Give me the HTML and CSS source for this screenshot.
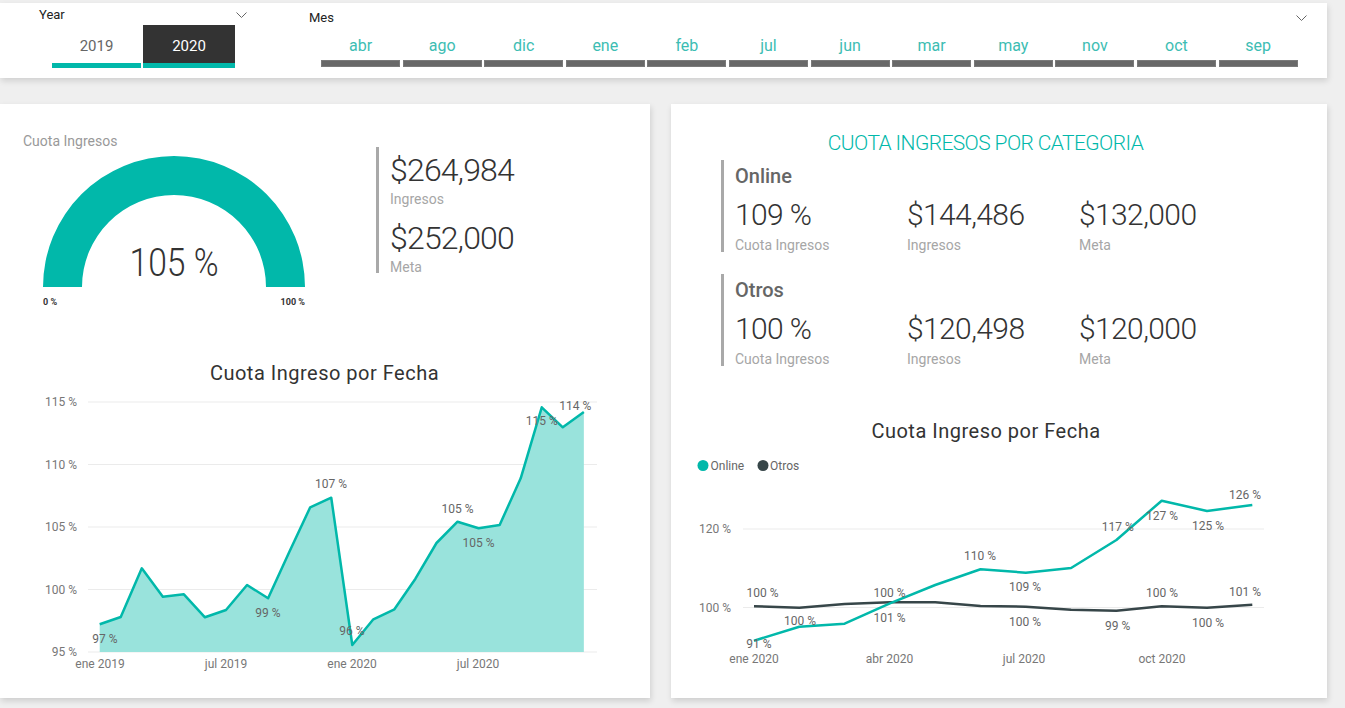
FILE: index.html
```html
<!DOCTYPE html>
<html lang="es">
<head>
<meta charset="utf-8">
<title>Cuota Ingresos</title>
<link rel="stylesheet" href="styles.css">
</head>
<body>
<div class="page">
  <header class="filters">
    <section class="slicer year">
      <div class="slicer-head">
        <span>Year</span>
        <svg class="chev" width="11" height="6" viewBox="0 0 11 6"><path d="M0.5 0.5 L5.5 5.5 L10.5 0.5" fill="none" stroke="#666" stroke-width="1"/></svg>
      </div>
      <div class="year-buttons">
        <div class="yb">2019</div>
        <div class="yb sel">2020</div>
      </div>
    </section>
    <section class="slicer mes">
      <div class="slicer-head">
        <span>Mes</span>
        <svg class="chev" width="11" height="6" viewBox="0 0 11 6"><path d="M0.5 0.5 L5.5 5.5 L10.5 0.5" fill="none" stroke="#666" stroke-width="1"/></svg>
      </div>
      <div class="months">
        <div class="month"><span>abr</span><i></i></div>
        <div class="month"><span>ago</span><i></i></div>
        <div class="month"><span>dic</span><i></i></div>
        <div class="month"><span>ene</span><i></i></div>
        <div class="month"><span>feb</span><i></i></div>
        <div class="month"><span>jul</span><i></i></div>
        <div class="month"><span>jun</span><i></i></div>
        <div class="month"><span>mar</span><i></i></div>
        <div class="month"><span>may</span><i></i></div>
        <div class="month"><span>nov</span><i></i></div>
        <div class="month"><span>oct</span><i></i></div>
        <div class="month"><span>sep</span><i></i></div>
      </div>
    </section>
  </header>

  <main class="panels">
    <section class="panel left">
      <div class="top-row">
        <div class="gauge">
          <div class="gauge-title">Cuota Ingresos</div>
          <svg class="gauge-svg" width="340" height="165" viewBox="0 149 340 165">
            <path d="M43 287 A131 131 0 0 1 305 287 L266 287 A92 92 0 0 0 82 287 Z" fill="#01b8aa"/>
            <text class="gauge-val" x="174" y="276" text-anchor="middle" textLength="89" lengthAdjust="spacingAndGlyphs">105 %</text>
            <text class="gauge-min" x="43" y="305">0 %</text>
            <text class="gauge-min" x="305" y="305" text-anchor="end">100 %</text>
          </svg>
        </div>
        <div class="kpis">
          <div class="kv">$264,984</div>
          <div class="kl">Ingresos</div>
          <div class="kv second">$252,000</div>
          <div class="kl">Meta</div>
        </div>
      </div>
      <svg class="chart" width="650" height="343" viewBox="0 355 650 343">
        <text class="chart-title" x="324.5" y="380" text-anchor="middle">Cuota Ingreso por Fecha</text>
        <g class="grid">
          <line x1="88" y1="402" x2="597" y2="402"/>
          <line x1="88" y1="464.5" x2="597" y2="464.5"/>
          <line x1="88" y1="527" x2="597" y2="527"/>
          <line x1="88" y1="589.5" x2="597" y2="589.5"/>
          <line x1="88" y1="652" x2="597" y2="652"/>
        </g>
        <g class="axis" text-anchor="end">
          <text x="77" y="406">115 %</text>
          <text x="77" y="468.5">110 %</text>
          <text x="77" y="531">105 %</text>
          <text x="77" y="593.5">100 %</text>
          <text x="77" y="656">95 %</text>
        </g>
        <g class="axis" text-anchor="middle">
          <text x="100" y="668">ene 2019</text>
          <text x="226" y="668">jul 2019</text>
          <text x="352" y="668">ene 2020</text>
          <text x="478" y="668">jul 2020</text>
        </g>
        <polygon class="area" points="99.7,652 99.7,624.3 120.75,617 141.8,568.3 162.85,596.7 183.9,594.3 204.95,617.3 226,610 247.05,585 268.1,598.3 289.15,552.3 310.2,507.3 331.25,497.7 352.3,645 373.35,619.3 394.4,609.3 415.45,578.7 436.5,543 457.55,521.7 478.6,528.3 499.65,525 520.7,478.3 541.75,407.3 562.8,427.3 583.85,412 583.85,652"/>
        <polyline class="line teal" points="99.7,624.3 120.75,617 141.8,568.3 162.85,596.7 183.9,594.3 204.95,617.3 226,610 247.05,585 268.1,598.3 289.15,552.3 310.2,507.3 331.25,497.7 352.3,645 373.35,619.3 394.4,609.3 415.45,578.7 436.5,543 457.55,521.7 478.6,528.3 499.65,525 520.7,478.3 541.75,407.3 562.8,427.3 583.85,412"/>
        <g class="dlabel" text-anchor="middle">
          <text x="105" y="642.7">97 %</text>
          <text x="268" y="616.7">99 %</text>
          <text x="331" y="488.3">107 %</text>
          <text x="352" y="634.7">96 %</text>
          <text x="457.5" y="512.7">105 %</text>
          <text x="478.5" y="546.7">105 %</text>
          <text x="541.7" y="425.3">115 %</text>
          <text x="575.3" y="409.7">114 %</text>
        </g>
      </svg>
    </section>

    <section class="panel right">
      <div class="cat-title">CUOTA INGRESOS POR CATEGORIA</div>
      <div class="cat">
        <div class="cat-name">Online</div>
        <div class="cat-vals">
          <div class="cv"><b>109 %</b><span>Cuota Ingresos</span></div>
          <div class="cv"><b>$144,486</b><span>Ingresos</span></div>
          <div class="cv"><b>$132,000</b><span>Meta</span></div>
        </div>
      </div>
      <div class="cat">
        <div class="cat-name">Otros</div>
        <div class="cat-vals">
          <div class="cv"><b>100 %</b><span>Cuota Ingresos</span></div>
          <div class="cv"><b>$120,498</b><span>Ingresos</span></div>
          <div class="cv"><b>$120,000</b><span>Meta</span></div>
        </div>
      </div>
      <svg class="chart chart-right" width="656" height="288" viewBox="671 410 656 288">
        <text class="chart-title" x="986" y="437.5" text-anchor="middle">Cuota Ingreso por Fecha</text>
        <circle cx="703" cy="465.5" r="5.5" fill="#01b8aa"/>
        <text class="legend" x="710.5" y="470">Online</text>
        <circle cx="763" cy="465.5" r="5.5" fill="#374649"/>
        <text class="legend" x="770" y="470">Otros</text>
        <g class="grid">
          <line x1="743" y1="529" x2="1264" y2="529"/>
          <line x1="743" y1="607.5" x2="1264" y2="607.5"/>
        </g>
        <g class="axis" text-anchor="end">
          <text x="731" y="533">120 %</text>
          <text x="731" y="611.5">100 %</text>
        </g>
        <g class="axis" text-anchor="middle">
          <text x="754" y="663">ene 2020</text>
          <text x="889.5" y="663">abr 2020</text>
          <text x="1024" y="663">jul 2020</text>
          <text x="1162" y="663">oct 2020</text>
        </g>
        <polyline class="line dark" points="754,606.3 799.3,607.7 844.6,604 889.9,602.3 935.2,602.3 980.5,606 1025.8,606.7 1071.1,609.7 1116.4,610.7 1161.7,606.3 1207,607.7 1252.3,604.7"/>
        <polyline class="line teal" points="754,640.7 799.3,626.7 844.6,623.7 889.9,603.3 935.2,585 980.5,569.3 1025.8,572.7 1071.1,568 1116.4,540 1161.7,500.7 1207,511 1252.3,505"/>
        <g class="dlabel" text-anchor="middle">
          <text x="762.5" y="596.7">100 %</text>
          <text x="800" y="625.3">100 %</text>
          <text x="759" y="647.7">91 %</text>
          <text x="889.5" y="596.7">100 %</text>
          <text x="889.5" y="622">101 %</text>
          <text x="980" y="559.7">110 %</text>
          <text x="1025" y="590.7">109 %</text>
          <text x="1025" y="625.7">100 %</text>
          <text x="1117.7" y="530.7">117 %</text>
          <text x="1117.7" y="629.7">99 %</text>
          <text x="1162" y="519.7">127 %</text>
          <text x="1162" y="596.7">100 %</text>
          <text x="1208" y="529.7">125 %</text>
          <text x="1208" y="626.7">100 %</text>
          <text x="1245" y="498.7">126 %</text>
          <text x="1245" y="595.7">101 %</text>
        </g>
      </svg>
    </section>
  </main>
</div>
</body>
</html>
```

FILE: styles.css
```css
html, body {
  margin: 0;
  padding: 0;
}
body {
  background: #efefef;
  font-family: Roboto, "Noto Sans", "Liberation Sans", sans-serif;
  color: #333;
  width: 1345px;
  height: 708px;
  overflow: hidden;
}
.page {
  padding-top: 3px;
}

/* ---------- filters bar ---------- */
.filters {
  width: 1327px;
  height: 75px;
  background: #fff;
  display: flex;
  box-shadow: 1px 3px 6px rgba(0, 0, 0, 0.13);
}
.slicer-head {
  display: flex;
  justify-content: space-between;
  align-items: center;
  height: 16px;
  line-height: 16px;
  font-size: 13px;
  color: #222;
}
.chev {
  display: block;
  margin-right: 3px;
}
.year {
  width: 211px;
  margin-left: 39px;
  padding-top: 4px;
}
.year-buttons {
  display: flex;
  gap: 2px;
  margin-left: 13px;
  margin-top: 2px;
}
.yb {
  width: 89px;
  height: 34px;
  padding-top: 4px;
  line-height: 34px;
  text-align: center;
  font-size: 15px;
  color: #666;
  border-bottom: 5px solid #01b8aa;
}
.yb.sel {
  width: 92px;
  background: #333;
  color: #fff;
}
.mes {
  width: 1001px;
  margin-left: 59px;
  padding-top: 7px;
}
.months {
  display: flex;
  gap: 2.6px;
  margin-left: 12px;
  margin-top: 6px;
}
.month {
  width: 79px;
}
.month span {
  display: block;
  height: 28px;
  line-height: 28px;
  text-align: center;
  font-size: 16px;
  color: #3dbdb3;
}
.month i {
  display: block;
  height: 7px;
  background: #686868;
  box-shadow: inset 0 0 0 1px #7a7a7a;
}

/* ---------- panels ---------- */
.panels {
  display: flex;
  gap: 21px;
  margin-top: 26px;
}
.panel {
  height: 594px;
  background: #fff;
  box-shadow: 1px 3px 6px rgba(0, 0, 0, 0.14);
}
.panel.left {
  width: 650px;
}
.panel.right {
  width: 656px;
}
.chart {
  display: block;
}

/* gauge + kpi */
.top-row {
  display: flex;
  height: 251px;
}
.gauge {
  width: 340px;
  padding-top: 29px;
}
.gauge-title {
  padding-left: 23px;
  font-size: 14px;
  line-height: 16px;
  color: #999;
}
.gauge-svg {
  display: block;
}
.gauge-val {
  font-family: Roboto, sans-serif;
  font-weight: 300;
  font-size: 39px;
  fill: #333;
}
.gauge-min {
  font-family: Roboto, sans-serif;
  font-weight: 700;
  font-size: 9px;
  fill: #333;
}
.kpis {
  margin-left: 36px;
  margin-top: 43px;
  height: 126px;
  box-sizing: border-box;
  padding-top: 4px;
  padding-left: 11px;
  border-left: 3px solid #a9a9a9;
}
.kv {
  font-size: 32px;
  line-height: 38px;
  font-weight: 300;
  letter-spacing: -0.8px;
  color: #333;
}
.kv.second {
  margin-top: 11px;
}
.kl {
  font-size: 14px;
  line-height: 18px;
  margin-top: 1px;
  color: #a6a6a6;
}

/* category kpis */
.cat-title {
  padding-top: 26px;
  padding-right: 27px;
  font-size: 21px;
  line-height: 26px;
  font-weight: 300;
  letter-spacing: -0.6px;
  color: #01b8aa;
  text-align: center;
}
.cat {
  margin-top: 4px;
  margin-left: 50px;
  height: 92px;
  box-sizing: border-box;
  padding-top: 4px;
  padding-left: 11px;
  border-left: 3px solid #a9a9a9;
}
.cat + .cat {
  margin-top: 22px;
}
.cat-name {
  font-size: 20px;
  line-height: 24px;
  font-weight: 500;
  color: #666;
}
.cat-vals {
  display: flex;
  margin-top: 9px;
}
.cv {
  width: 172px;
}
.cv b {
  display: block;
  font-size: 30px;
  line-height: 36px;
  font-weight: 300;
  letter-spacing: -0.6px;
  color: #333;
}
.cv span {
  display: block;
  margin-top: 3px;
  font-size: 14px;
  line-height: 18px;
  color: #a6a6a6;
}
.chart-right {
  margin-top: 44px;
}

/* chart styling */
.chart-title {
  font-family: Roboto, sans-serif;
  font-size: 20px;
  letter-spacing: 0.5px;
  fill: #333;
}
.grid line {
  stroke: #ebebeb;
  stroke-width: 1;
}
.axis text {
  font-family: Roboto, sans-serif;
  font-size: 12px;
  fill: #777;
}
.dlabel text {
  font-family: Roboto, sans-serif;
  font-size: 12px;
  fill: #666;
}
.legend {
  font-family: Roboto, sans-serif;
  font-size: 12px;
  fill: #666;
}
.area {
  fill: #99e3dc;
}
.line {
  fill: none;
  stroke-width: 2.5;
  stroke-linejoin: round;
}
.line.teal {
  stroke: #01b8aa;
}
.line.dark {
  stroke: #374649;
}
```
